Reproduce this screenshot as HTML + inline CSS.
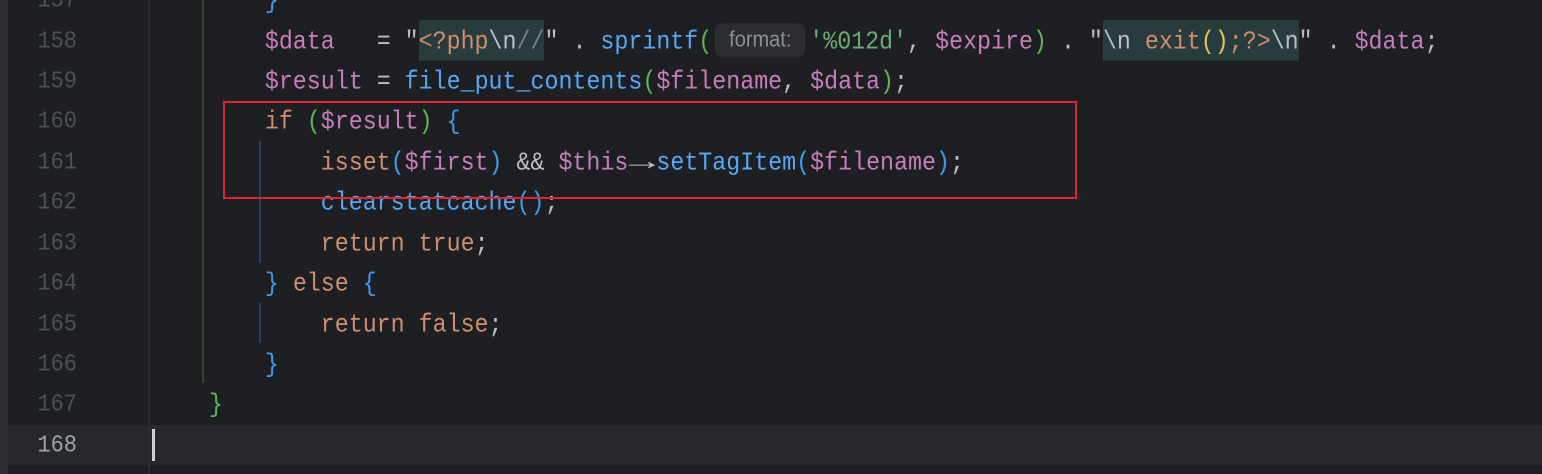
<!DOCTYPE html>
<html><head><meta charset="utf-8"><style>
html,body{margin:0;padding:0}
body{width:1542px;height:474px;background:#1e1f22;position:relative;overflow:hidden;font-family:"Liberation Mono",monospace}
.strip{position:absolute;left:0;top:0;width:8px;height:474px;background:#2b2d30}
.sep{position:absolute;left:148px;top:0;width:2px;height:474px;background:#2b2d30}
.cur{position:absolute;left:8px;top:425px;width:1534px;height:40px;background:#26282e}
.caret{position:absolute;left:152px;top:429px;width:3px;height:32px;background:#ced0d6}
.ln{position:absolute;left:8px;width:69px;text-align:right;font-size:22px;color:#4b5059;height:40px;line-height:40px;transform:scaleY(1.1)}
.code{position:absolute;left:153px;font-size:23.3px;color:#bcbec4;white-space:pre;height:40px;line-height:40px;transform:scaleY(1.1);transform-origin:0 50%}
.v{color:#c77dbb}.f{color:#56a8f5}.k{color:#cf8e6d}.s{color:#6aab73}.g{color:#5fb456}.b{color:#3c9df0}.y{color:#e6c44d}
.hl{background:#293c3d;display:inline-block;height:37px}
.hint{display:inline-block;font-family:"Liberation Sans",sans-serif;font-size:20px;color:#8c9096;background:#2b2d30;border-radius:6px;height:31px;line-height:31px;padding:0 7px;margin:0 4px 0 3px;vertical-align:top;margin-top:3px;width:76px;text-align:center}
.arr{display:inline-block;width:28px;text-align:center;transform:scaleX(1.9)}
.gd{position:absolute;width:2px}
.box{position:absolute;left:223px;top:101px;width:850px;height:94px;border:2px solid #e0262d}
</style></head><body>
<div class="strip"></div>
<div class="cur"></div>
<div class="sep"></div>
<div class="gd" style="left:202px;top:0;height:383px;background:#2c4a2f"></div>
<div class="gd" style="left:259px;top:141px;height:122px;background:#23405c"></div>
<div class="gd" style="left:259px;top:303px;height:40px;background:#23405c"></div>

<div class="ln" style="top:-19px">157</div>
<div class="ln" style="top:22px">158</div>
<div class="ln" style="top:62px">159</div>
<div class="ln" style="top:102px">160</div>
<div class="ln" style="top:143px">161</div>
<div class="ln" style="top:183px">162</div>
<div class="ln" style="top:224px">163</div>
<div class="ln" style="top:264px">164</div>
<div class="ln" style="top:305px">165</div>
<div class="ln" style="top:345px">166</div>
<div class="ln" style="top:385px">167</div>
<div class="ln" style="top:426px;color:#a1a3ab">168</div>

<div class="code" style="top:-19px">        <span class="b">}</span></div>
<div class="code" style="top:22px">        <span class="v">$data</span>   = "<span class="hl"><span class="k">&lt;?php</span>\n<span style="color:#7b7e84">//</span></span>" . <span class="f">sprintf</span><span class="g">(</span><span class="hint">format:</span><span class="s">'%012d'</span>, <span class="v">$expire</span><span class="g">)</span> . "<span class="hl">\n <span class="k">exit</span><span class="y">()</span><span class="k">;?&gt;</span>\n</span>" . <span class="v">$data</span>;</div>
<div class="code" style="top:62px">        <span class="v">$result</span> = <span class="f">file_put_contents</span><span class="g">(</span><span class="v">$filename</span>, <span class="v">$data</span><span class="g">)</span>;</div>
<div class="code" style="top:102px">        <span class="k">if</span> <span class="g">(</span><span class="v">$result</span><span class="g">)</span> <span class="b">{</span></div>
<div class="code" style="top:143px">            <span class="k">isset</span><span class="b">(</span><span class="v">$first</span><span class="b">)</span> &amp;&amp; <span class="v">$this</span><span class="arr">→</span><span class="f">setTagItem</span><span class="b">(</span><span class="v">$filename</span><span class="b">)</span>;</div>
<div class="code" style="top:183px">            <span class="f">clearstatcache</span><span class="b">()</span>;</div>
<div class="code" style="top:224px">            <span class="k">return true</span>;</div>
<div class="code" style="top:264px">        <span class="b">}</span> <span class="k">else</span> <span class="b">{</span></div>
<div class="code" style="top:305px">            <span class="k">return false</span>;</div>
<div class="code" style="top:345px">        <span class="b">}</span></div>
<div class="code" style="top:385px">    <span class="g">}</span></div>
<div class="caret"></div>
<div class="box"></div>
</body></html>
